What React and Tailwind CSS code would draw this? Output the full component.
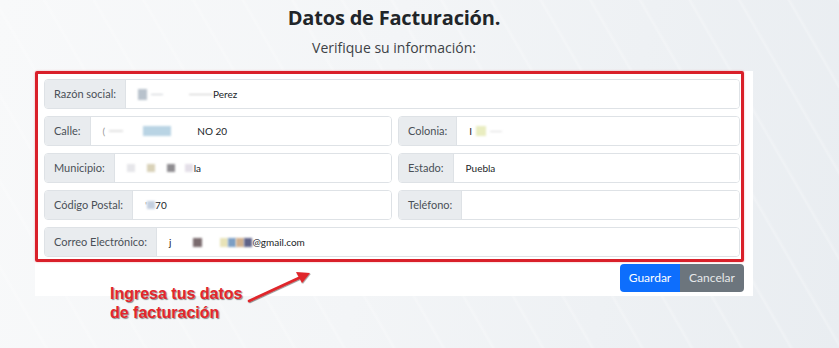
import React from "react";

function Blur({ c, w = 10, h = 9 }) {
  return <span className={`inline-block align-middle blur-[1px] ${c}`} style={{ width: w, height: h }} />;
}

function Field({ label, children, className = "" }) {
  return (
    <div className={`flex h-[30px] rounded-[4px] border border-[#dee2e6] overflow-hidden ${className}`}>
      <div className="flex items-center px-[9px] bg-[#e9ecef] border-r border-[#dee2e6] text-[#495057] whitespace-nowrap">
        {label}
      </div>
      <div className="flex-1 flex items-center gap-[4px] px-[12px] bg-white text-[#212529] text-[10px] whitespace-nowrap">
        {children}
      </div>
    </div>
  );
}

export default function App() {
  return (
    <div
      className="relative w-[839px] h-[348px] overflow-hidden bg-[linear-gradient(100deg,#f8f9fa_0%,#f3f5f7_45%,#e9edf1_100%)] font-['Lato','Liberation_Sans',sans-serif]"
    >
      {/* faint diagonal streaks on the background */}
      <div className="absolute inset-0 bg-[repeating-linear-gradient(60deg,transparent_0px,transparent_38px,rgba(255,255,255,0.35)_40px,transparent_43px)] opacity-70" />

      <div className="relative flex flex-col w-[718px] ml-[35px]">
        <h1 className="mt-[4px] text-center text-[20px] leading-[28px] font-bold text-[#212529] font-['Open_Sans','Lato',sans-serif] tracking-[-0.2px]">
          Datos de Facturación.
        </h1>
        <p className="mt-[7px] text-center text-[14px] leading-[18px] text-[#3d4246] font-['Open_Sans','Lato',sans-serif]">
          Verifique su información:
        </p>

        <div className="mt-[14px] bg-white pb-[4px] text-[11px]">
          <div className="w-[709px] border-[3px] border-[#d9202a] rounded-[2px] pl-[6px] pr-[1px] pt-[5px] pb-[2px] flex flex-col gap-[7px] shadow-[0_0_2px_rgba(217,32,42,0.4)]">
            <Field label="Razón social:">
              <Blur c="bg-[#b8c2cc]" w={9} h={11} />
              <Blur c="bg-[#c8ccd2]" w={12} h={1} />
              <span className="w-[18px]" />
              <Blur c="bg-[#c8c8c8]" w={24} h={1} />
              <span className="-ml-[4px]">Perez</span>
            </Field>
            <div className="flex gap-[6px]">
              <Field label="Calle:" className="w-[348px]">
                <span className="text-[#999]">(</span>
                <Blur c="bg-[#e2e2e2]" w={14} h={2} />
                <span className="w-[12px]" />
                <Blur c="bg-[#b9d4e4]" w={28} h={10} />
                <span className="w-[18px]" />
                <span>NO 20</span>
              </Field>
              <Field label="Colonia:" className="flex-1">
                <span>I</span>
                <Blur c="bg-[#e9edc0]" w={10} h={10} />
                <Blur c="bg-[#dcdcdc]" w={12} h={1} />
              </Field>
            </div>
            <div className="flex gap-[6px]">
              <Field label="Municipio:" className="w-[348px]">
                <Blur c="bg-[#e6e6ea]" w={8} h={8} />
                <span className="w-[4px]" />
                <Blur c="bg-[#d9d2b8]" w={8} h={8} />
                <span className="w-[4px]" />
                <Blur c="bg-[#8e8c90]" w={8} h={8} />
                <span className="w-[2px]" />
                <Blur c="bg-[#e4dfe8]" w={8} h={8} />
                <span className="-ml-[3px]">la</span>
              </Field>
              <Field label="Estado:" className="flex-1">
                <span>Puebla</span>
              </Field>
            </div>
            <div className="flex gap-[6px]">
              <Field label="Código Postal:" className="w-[348px]">
                <span className="text-[#999] -mr-[4px]">'</span>
                <Blur c="bg-[#c3cfe0]" w={8} h={8} />
                <span className="-ml-[4px]">70</span>
              </Field>
              <Field label="Teléfono:" className="flex-1" />
            </div>
            <Field label="Correo Electrónico:">
              <span>j</span>
              <span className="w-[14px]" />
              <Blur c="bg-[#7a6b6e]" w={9} h={9} />
              <span className="w-[10px]" />
              <span className="flex items-center">
                <Blur c="bg-[#e8e3b8]" w={8} h={9} />
                <Blur c="bg-[#7c9ec4]" w={8} h={9} />
                <Blur c="bg-[#d1b08e]" w={8} h={9} />
                <Blur c="bg-[#5f6288]" w={8} h={9} />
              </span>
              <span className="-ml-[4px]">@gmail.com</span>
            </Field>
          </div>

          <div className="flex justify-end w-[709px] mt-[2px]">
            <button className="w-[60px] h-[28px] bg-[#0d6efd] text-white text-[12px] rounded-l-[4px]">
              Guardar
            </button>
            <button className="w-[64px] h-[28px] bg-[#6c757d] text-[#e6e8ea] text-[12px] rounded-r-[4px]">
              Cancelar
            </button>
          </div>
        </div>
      </div>

      {/* annotation arrow */}
      <svg className="absolute left-0 top-0" width="839" height="348" viewBox="0 0 839 348">
        <defs>
          <filter id="sh" x="-20%" y="-20%" width="140%" height="140%">
            <feDropShadow dx="0.6" dy="0.8" stdDeviation="0.6" floodColor="#000" floodOpacity="0.5" />
          </filter>
        </defs>
        <g filter="url(#sh)">
          <path d="M249 301 L301 277" stroke="#e0252b" strokeWidth="2.6" strokeLinecap="round" />
          <path d="M310 273 L296 272 L302 283 Z" fill="#e0252b" />
        </g>
      </svg>

      <div className="absolute left-[110px] top-[284px] text-[#e3262c] font-bold text-[16px] leading-[19px] font-['Liberation_Sans',Arial,sans-serif] [text-shadow:1px_1px_1px_rgba(0,0,0,0.45)]">
        Ingresa tus datos
        <br />
        de facturación
      </div>
    </div>
  );
}
